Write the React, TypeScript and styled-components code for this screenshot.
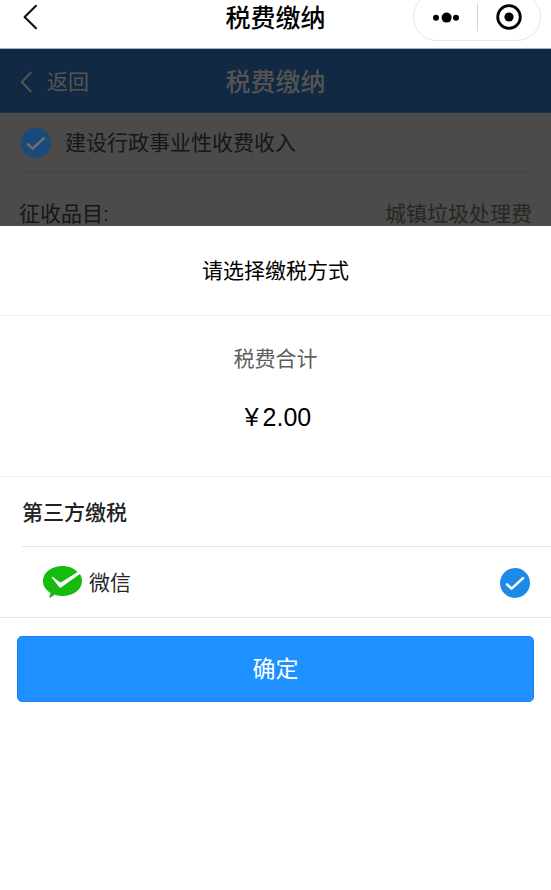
import React, { useState } from "react";
import styled, { createGlobalStyle } from "styled-components";

const GlobalStyle = createGlobalStyle`
  * {
    box-sizing: border-box;
  }
  html,
  body {
    margin: 0;
    background: #fff;
  }
  body,
  button,
  input {
    font-family: "Liberation Sans", "Noto Sans CJK SC", sans-serif;
  }
  h1,
  h2,
  h3,
  p {
    margin: 0;
  }
  button {
    border: 0;
    padding: 0;
    background: none;
    color: inherit;
    cursor: pointer;
  }
`;

const NativeBar = styled.header`
  display: grid;
  grid-template-columns: 1fr auto 1fr;
  align-items: center;
  height: 49px;
  padding: 0 10px 16px 22px;
  border-bottom: 1px solid #a9b6bf;
  overflow: hidden;
`;

const NativeTitle = styled.h1`
  margin-left: -12px;
  padding-top: 2px;
  color: #000;
  font-size: 25px;
  line-height: 32px;
  font-weight: 500;
`;

const IconButton = styled.button`
  display: flex;
  justify-self: start;
`;

const Capsule = styled.div`
  justify-self: end;
  display: grid;
  grid-template-columns: 1fr 1px 1fr;
  align-items: center;
  width: 128px;
  height: 48px;
  margin: -8px 0;
  border: 1px solid #e6e6e6;
  border-radius: 24px;
`;

const CapsuleButton = styled.button`
  display: flex;
  justify-content: center;
`;

const CapsuleDivider = styled.span`
  height: 28px;
  background: #d6d6d6;
`;

const PageBar = styled.nav`
  display: grid;
  grid-template-columns: 1fr auto 1fr;
  align-items: center;
  height: 64px;
  padding: 2px 20px 0;
  border-bottom: 1px solid #15324f;
  background: #112943;
  color: #555452;
`;

const BackLink = styled.a`
  display: flex;
  align-items: center;
  gap: 15px;
  color: inherit;
  font-size: 21px;
  line-height: 32px;
  text-decoration: none;
`;

const PageTitle = styled.h2`
  font-size: 25px;
  line-height: 32px;
  font-weight: 500;
`;

const DimmedContent = styled.section`
  height: 113px;
  padding: 0 19px;
  background: #4c4b49;
  overflow: hidden;
`;

const HiddenInput = styled.input`
  appearance: none;
  width: 0;
  height: 0;
  margin: 0;
`;

const FeeOption = styled.label`
  display: flex;
  align-items: center;
  height: 59px;
  margin-left: 2px;
  padding-top: 2px;
  border-bottom: 1px solid #434342;
  color: #161616;
  font-size: 21px;
  line-height: 32px;
`;

const FeeName = styled.span`
  margin-left: 14px;
`;

const FeeDetail = styled.div`
  display: flex;
  justify-content: space-between;
  padding-top: 26px;
  color: #161616;
  font-size: 21px;
  line-height: 32px;
`;

const FeeValue = styled.span`
  color: #262625;
`;

const Sheet = styled.form`
  background: #fff;
  color: #000;
`;

const SheetTitle = styled.h2`
  padding: 29px 0 28px;
  border-bottom: 1px solid #ededed;
  font-size: 21px;
  line-height: 32px;
  font-weight: 400;
  text-align: center;
`;

const Total = styled.div`
  display: flex;
  flex-direction: column;
  align-items: center;
  gap: 26px;
  padding: 27px 0 43px;
  border-bottom: 1px solid #ededed;
`;

const TotalLabel = styled.p`
  color: #5f5f5f;
  font-size: 21px;
  line-height: 32px;
`;

const Amount = styled.p`
  display: flex;
  gap: 4px;
  padding-left: 5px;
  font-size: 25px;
  line-height: 32px;
`;

const Methods = styled.section`
  padding-left: 22px;
  border-bottom: 1px solid #e8e8e8;
`;

const MethodsTitle = styled.h3`
  padding: 20px 0 17px;
  border-bottom: 1px solid #e4e4e4;
  color: #222;
  font-size: 21px;
  line-height: 32px;
  font-weight: 500;
`;

const Method = styled.label`
  display: flex;
  align-items: center;
  height: 70px;
  padding: 2px 21px 0;
  color: #262626;
  font-size: 21px;
  line-height: 32px;
  cursor: pointer;
`;

const MethodName = styled.span`
  flex: 1;
  margin-left: 7px;
`;

const Confirm = styled.button`
  display: block;
  width: calc(100% - 34px);
  height: 66px;
  margin: 18px 17px;
  border: 1px solid #1484f2;
  border-radius: 5px;
  background: #1e90ff;
  color: #fff;
  font-size: 23px;
  line-height: 32px;
`;

function Tick({ fill, stroke }: { fill: string; stroke: string }) {
  return (
    <svg width="30" height="30" viewBox="0 0 30 30" aria-hidden="true">
      <circle cx="15" cy="15" r="15" fill={fill} />
      <path
        d="M7 16.4L11.6 20.7L23 10.2"
        fill="none"
        stroke={stroke}
        strokeWidth="2.5"
        strokeLinecap="round"
        strokeLinejoin="round"
      />
    </svg>
  );
}

function WeChatPayIcon() {
  return (
    <svg width="39" height="34" viewBox="0 0 39 34" aria-hidden="true">
      <path
        d="M19.5 0C8.7 0 0 6.6 0 15C0 19.7 2.7 23.8 7 26.5C7.5 27 7.5 27.6 7.3 28.2L6.2 31.1C6.1 31.7 6.6 32 7.1 31.7L11.2 29.2C11.8 28.8 12.3 28.7 13 28.9C15 29.6 17.2 30 19.5 30C30.3 30 39 23.4 39 15C39 12.4 38.2 10 36.8 8L18.4 21.2C17.5 21.8 16.8 21.7 16.2 21L9 12C8.5 11.1 9.1 10.6 9.9 11L16.2 15.8C17 16.4 17.7 16.4 18.6 15.9L34.6 6C31 2.3 25.6 0 19.5 0Z"
        fill="#15bb0d"
      />
    </svg>
  );
}

export default function App() {
  const [method, setMethod] = useState("wechat");

  return (
    <>
      <GlobalStyle />
      <NativeBar>
        <IconButton aria-label="后退">
          <svg width="16" height="26" viewBox="0 0 16 26" aria-hidden="true">
            <path
              d="M14 1.8L2.6 13L14 24.2"
              fill="none"
              stroke="#111"
              strokeWidth="2.1"
              strokeLinecap="round"
              strokeLinejoin="round"
            />
          </svg>
        </IconButton>
        <NativeTitle>税费缴纳</NativeTitle>
        <Capsule>
          <CapsuleButton aria-label="更多">
            <svg width="28" height="12" viewBox="0 0 28 12" aria-hidden="true">
              <circle cx="5" cy="6.8" r="3" />
              <circle cx="15.6" cy="6.6" r="5" />
              <circle cx="25" cy="6.8" r="3" />
            </svg>
          </CapsuleButton>
          <CapsuleDivider />
          <CapsuleButton aria-label="关闭">
            <svg width="26" height="26" viewBox="0 0 26 26" aria-hidden="true">
              <circle cx="13" cy="13" r="11.3" fill="none" stroke="#000" strokeWidth="2.8" />
              <circle cx="13" cy="13" r="4.6" />
            </svg>
          </CapsuleButton>
        </Capsule>
      </NativeBar>

      <PageBar>
        <BackLink href="#back">
          <svg width="12" height="22" viewBox="0 0 12 22" aria-hidden="true">
            <path
              d="M10.6 1.8L1.8 11L10.6 20.2"
              fill="none"
              stroke="currentColor"
              strokeWidth="2"
              strokeLinecap="round"
            />
          </svg>
          返回
        </BackLink>
        <PageTitle>税费缴纳</PageTitle>
      </PageBar>

      <DimmedContent>
        <FeeOption>
          <HiddenInput type="checkbox" defaultChecked />
          <Tick fill="#1a497c" stroke="#706f6d" />
          <FeeName>建设行政事业性收费收入</FeeName>
        </FeeOption>
        <FeeDetail>
          <span>征收品目:</span>
          <FeeValue>城镇垃圾处理费</FeeValue>
        </FeeDetail>
      </DimmedContent>

      <Sheet onSubmit={(event) => event.preventDefault()}>
        <SheetTitle>请选择缴税方式</SheetTitle>
        <Total>
          <TotalLabel>税费合计</TotalLabel>
          <Amount>
            <span>¥</span>
            <span>2.00</span>
          </Amount>
        </Total>
        <Methods>
          <MethodsTitle>第三方缴税</MethodsTitle>
          <Method>
            <WeChatPayIcon />
            <MethodName>微信</MethodName>
            <HiddenInput
              type="radio"
              name="method"
              value="wechat"
              checked={method === "wechat"}
              onChange={(event) => setMethod(event.target.value)}
            />
            <Tick fill="#1e8ae8" stroke="#fff" />
          </Method>
        </Methods>
        <Confirm type="submit">确定</Confirm>
      </Sheet>
    </>
  );
}
